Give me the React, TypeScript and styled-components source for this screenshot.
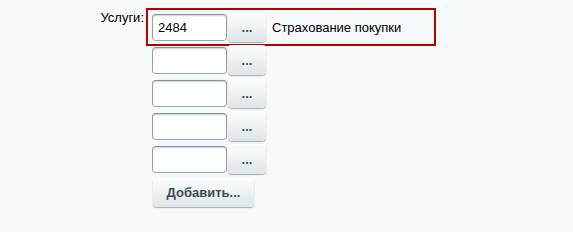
import React, { useState } from 'react';
import styled, { createGlobalStyle } from 'styled-components';

const GlobalStyle = createGlobalStyle`
  html, body {
    margin: 0;
    padding: 0;
    background: #f5f9f9;
    font-family: "Liberation Sans", Arial, sans-serif;
    font-size: 13px;
    color: #000;
  }
`;

const Page = styled.div`
  height: 232px;
  padding-top: 10px;
  box-sizing: border-box;
`;

const Field = styled.div`
  display: grid;
  grid-template-columns: 144px auto;
  column-gap: 8px;
  align-items: start;
`;

const Label = styled.div`
  text-align: right;
  line-height: 15px;
`;

const Values = styled.div`
  display: flex;
  flex-direction: column;
  align-items: flex-start;
  padding-top: 2px;
`;

const Row = styled.div<{ $highlight?: boolean }>`
  display: flex;
  align-items: center;
  height: 30px;
  margin-bottom: 3px;
  margin-left: -2px;
  padding-left: 2px;
  box-sizing: border-box;
  width: ${p => (p.$highlight ? '282px' : 'auto')};
  outline: ${p => (p.$highlight ? '2px solid #b80000' : 'none')};
  outline-offset: 2px;
`;

const Input = styled.input`
  width: 75px;
  height: 27px;
  box-sizing: border-box;
  margin: 0 1px 0 0;
  padding: 0 5px;
  border: 1px solid;
  border-color: #87919c #959ea9 #9ea7b1 #959ea9;
  border-radius: 4px;
  background: #fff;
  box-shadow: 0 1px 0 0 rgba(255, 255, 255, 0.3), inset 0 2px 2px -1px rgba(180, 188, 191, 0.7);
  font-family: "Liberation Sans", Arial, sans-serif;
  font-size: 13px;
  color: #000;
  outline: none;
`;

const Button = styled.button<{ $wide?: boolean }>`
  height: ${p => (p.$wide ? '29px' : '30px')};
  width: ${p => (p.$wide ? '101px' : '38px')};
  box-sizing: border-box;
  margin: 0;
  padding: 0;
  border: none;
  border-radius: 4px;
  background: linear-gradient(to bottom, #fbfcfc 0%, #eef3f4 45%, #dde5e8 100%);
  box-shadow: 0 0 1px rgba(0, 0, 0, 0.18), 0 1px 1px rgba(0, 0, 0, 0.3), inset 0 1px #fff;
  font-family: "Liberation Sans", Arial, sans-serif;
  font-size: 13px;
  font-weight: bold;
  color: #3f4b54;
  cursor: pointer;
`;

const Title = styled.span`
  margin-left: 6px;
  line-height: 15px;
`;

const AddButton = styled(Button)`
  margin: 1px 0 0 1px;
`;

export default function App() {
  const [values, setValues] = useState<string[]>(['2484', '', '', '', '']);

  const update = (i: number, v: string) => {
    const next = [...values];
    next[i] = v;
    setValues(next);
  };

  return (
    <Page>
      <GlobalStyle />
      <Field>
        <Label>Услуги:</Label>
        <Values>
          {values.map((v, i) => (
            <Row key={i} $highlight={i === 0}>
              <Input value={v} onChange={e => update(i, e.target.value)} />
              <Button>...</Button>
              {i === 0 && <Title>Страхование покупки</Title>}
            </Row>
          ))}
          <AddButton $wide onClick={() => setValues([...values, ''])}>
            Добавить...
          </AddButton>
        </Values>
      </Field>
    </Page>
  );
}
